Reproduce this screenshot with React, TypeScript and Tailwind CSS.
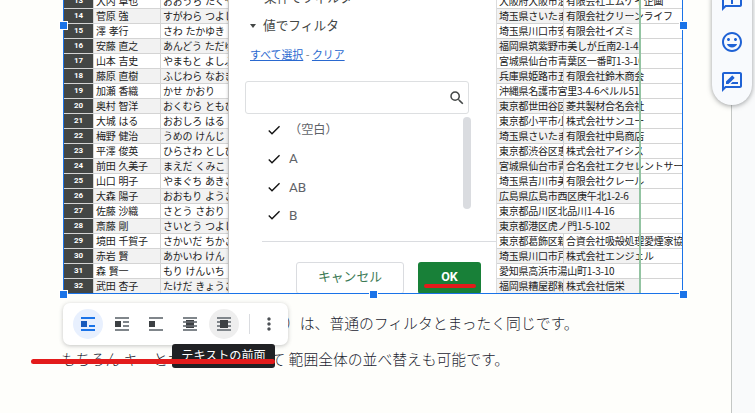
import clsx from "clsx";
import {
  MdCheck,
  MdMoreVert,
  MdOutlineAddComment,
  MdOutlineInsertEmoticon,
  MdOutlineRateReview,
  MdSearch,
} from "react-icons/md";

interface Row {
  no: number;
  nama: string;
  kana: string;
  alamat: string;
  kaisha?: string;
}

const rows: Row[] = [
  { no: 13, nama: "大内 卓也", kana: "おおうち たくや", alamat: "大阪府大阪市浪速区", kaisha: "有限会社エムケイ企画" },
  { no: 14, nama: "菅原 強", kana: "すがわら つよし", alamat: "埼玉県さいたま市", kaisha: "有限会社クリーンライフ" },
  { no: 15, nama: "澤 孝行", kana: "さわ たかゆき", alamat: "埼玉県川口市安行", kaisha: "有限会社イズミ" },
  { no: 16, nama: "安藤 直之", kana: "あんどう ただゆき", alamat: "福岡県筑紫野市美しが丘南2-1-4." },
  { no: 17, nama: "山本 吉史", kana: "やまもと よしふみ", alamat: "宮城県仙台市青葉区一番町1-3-10" },
  { no: 18, nama: "藤原 直樹", kana: "ふじわら なおき", alamat: "兵庫県姫路市五軒", kaisha: "有限会社鈴木商会" },
  { no: 19, nama: "加瀬 香織", kana: "かせ かおり", alamat: "沖縄県名護市宮里3-4-6ペルル51" },
  { no: 20, nama: "奥村 智洋", kana: "おくむら ともひろ", alamat: "東京都世田谷区桜", kaisha: "菱共製材合名会社" },
  { no: 21, nama: "大城 はる", kana: "おおしろ はる", alamat: "東京都小平市小川", kaisha: "株式会社サンユー" },
  { no: 22, nama: "梅野 健治", kana: "うめの けんじ", alamat: "埼玉県さいたま市", kaisha: "有限会社中島商店" },
  { no: 23, nama: "平澤 俊英", kana: "ひらさわ としひで", alamat: "東京都渋谷区恵比", kaisha: "株式会社アイシス" },
  { no: 24, nama: "前田 久美子", kana: "まえだ くみこ", alamat: "宮城県仙台市青葉", kaisha: "合名会社エクセレントサービス" },
  { no: 25, nama: "山口 明子", kana: "やまぐち あきこ", alamat: "埼玉県吉川市美南", kaisha: "有限会社クレール" },
  { no: 26, nama: "大森 陽子", kana: "おおもり ようこ", alamat: "広島県広島市西区庚午北1-2-6" },
  { no: 27, nama: "佐藤 沙織", kana: "さとう さおり", alamat: "東京都品川区北品川1-4-16" },
  { no: 28, nama: "斎藤 剛", kana: "さいとう つよし", alamat: "東京都港区虎ノ門1-5-102" },
  { no: 29, nama: "境田 千賀子", kana: "さかいだ ちかこ", alamat: "東京都葛飾区新小", kaisha: "合資会社吸殻処理愛煙家協会" },
  { no: 30, nama: "赤岩 賢", kana: "あかいわ けん", alamat: "埼玉県川口市戸塚", kaisha: "株式会社エンジェル" },
  { no: 31, nama: "森 賢一", kana: "もり けんいち", alamat: "愛知県高浜市湯山町1-3-10" },
  { no: 32, nama: "武田 杏子", kana: "たけだ きょうこ", alamat: "福岡県糟屋郡粕屋", kaisha: "株式会社信栄" },
];

const cell = "h-full shrink-0 overflow-hidden whitespace-nowrap border-b border-[#d4d4d4]";

function NameTable() {
  return (
    <div className="w-[165px] shrink-0 overflow-hidden border-r border-[#dcdcdc] text-[10px] leading-[13px] tracking-[-0.25px] text-[#222] [word-spacing:1px]">
      <div className="-mt-[6px]">
        {rows.map((r) => (
          <div key={r.no} className={clsx("flex h-[15px]", r.no % 2 === 0 ? "bg-[#f2f2f2]" : "bg-white")}>
            <div className={clsx(cell, "w-[29px] bg-[#434645] text-center font-['Roboto'] text-[8px] leading-[14px] font-bold tracking-normal text-white")}>
              {r.no}
            </div>
            <div className={clsx(cell, "w-[68px] border-r border-l pl-[2px]")}>{r.nama}</div>
            <div className={clsx(cell, "w-[68px] pl-[2px]")}>{r.kana}</div>
          </div>
        ))}
      </div>
    </div>
  );
}

function AddressTable() {
  return (
    <div className="relative w-[186px] shrink-0 overflow-hidden border-l border-[#dcdcdc] text-[10px] leading-[13px] tracking-[-0.25px] text-[#222]">
      <div className="-mt-[6px]">
        {rows.map((r) => {
          const bg = r.no % 2 === 0 ? "bg-[#f2f2f2]" : "bg-white";
          return (
            <div key={r.no} className="flex h-[15px]">
              {r.kaisha ? (
                <>
                  <div className={clsx(cell, bg, "w-[67px] border-r pl-[2px]")}>{r.alamat}</div>
                  <div className={clsx("h-full w-[76px] shrink-0 border-b border-[#d4d4d4] pl-[2px] whitespace-nowrap", bg)}>
                    <span className="relative">{r.kaisha}</span>
                  </div>
                </>
              ) : (
                <div className={clsx(cell, bg, "w-[143px] pl-[2px]")}>{r.alamat}</div>
              )}
              <div className="h-full flex-1 border-b border-[#d4d4d4]" />
            </div>
          );
        })}
      </div>
      {/* Frozen range edge */}
      <div className="absolute inset-y-0 left-[142px] w-[1.5px] bg-[#93c4a2]" />
    </div>
  );
}

function FilterPanel() {
  return (
    <div className="relative w-[267px] shrink-0 overflow-hidden bg-white text-[#444746] shadow-[-1px_0_3px_rgba(0,0,0,0.2)]">
      <div className="-mt-[11px] flex h-[16px] items-center pl-[21px]">
        <span className="h-0 w-0 border-y-[3px] border-l-[4px] border-y-transparent border-l-[#444746]" />
        <span className="ml-[10px] text-[12.7px] leading-[16px]">条件でフィルタ</span>
      </div>
      <div className="mt-[11px] flex h-[18px] items-center pl-[21px]">
        <span className="mt-[2px] h-0 w-0 border-x-[3.5px] border-t-[4px] border-x-transparent border-t-[#444746]" />
        <span className="ml-[7px] text-[12.7px] leading-[18px]">値でフィルタ</span>
      </div>
      <div className="mt-[11px] pl-[21px] text-[10.9px] leading-[18px] text-[#2a69d0]">
        <span className="underline underline-offset-1">すべて選択</span>
        <span className="text-[#777]"> - </span>
        <span className="underline underline-offset-1">クリア</span>
      </div>
      <div className="mt-[18px] ml-[16px] flex h-[33px] w-[224px] items-center justify-end rounded-[3px] border border-[#dddfe1] pr-[2px]">
        <MdSearch className="size-[18px] text-[#444746]" />
      </div>
      <div className="mt-[2px] ml-[16px] flex h-[112px] w-[226px] justify-between">
        <div className="pl-[21px]">
          {["（空白）", "A", "AB", "B"].map((v) => (
            <div key={v} className="flex h-[28.4px] items-center font-['Roboto','Noto_Sans_CJK_JP'] text-[13.5px] text-[#5f6368]">
              <MdCheck className="mr-[7px] size-[16px] text-[#111]" />
              {v === "（空白）" ? <span className="text-[12.2px] leading-[18px]">{v}</span> : <span>{v}</span>}
            </div>
          ))}
        </div>
        <div className="mt-[1px] h-[92px] w-[8px] rounded-full bg-[#dadce0]" />
      </div>
      <div className="mt-[13px] ml-[33px] h-px bg-[#dadce0]" />
      <div className="mt-[20px] ml-[67px] flex gap-[14px]">
        <div className="flex h-[32px] w-[108px] items-center justify-center rounded-[3px] border border-[#dadce0] pb-[4px] text-[12.8px] text-[#3c7a55]">
          キャンセル
        </div>
        <div className="flex h-[32px] w-[63px] flex-col items-center rounded-[3px] bg-[#188038] pt-[7px] font-['Roboto'] text-[12.5px] leading-[16px] font-bold text-white">
          OK
          <div className="h-[4px] w-[52px] shrink-0 -translate-y-px rounded-full bg-[#e31b1b]" />
        </div>
      </div>
    </div>
  );
}

const bar = "fill-[#80868b]";
const box = "fill-[#3c4043]";

function WrapInline() {
  return (
    <svg viewBox="0 0 14 14" className="size-[14px] fill-[#1a73e8]">
      <path d="M0 0h14v2H0zM0 12h14v2H0zM8 8h6v2H8z" />
      <path d="M0 4h6v6H0z" className="fill-[#185abc]" />
    </svg>
  );
}

function WrapText() {
  return (
    <svg viewBox="0 0 14 14" className="size-[14px]">
      <path d="M0 0h14v2H0zM0 12h14v2H0zM8 4h6v2H8zM8 8h6v2H8z" className={bar} />
      <path d="M0 4h6v6H0z" className={box} />
    </svg>
  );
}

function BreakText() {
  return (
    <svg viewBox="0 0 14 14" className="size-[14px]">
      <path d="M0 0h14v2H0zM0 12h14v2H0z" className={bar} />
      <path d="M0 4h6v6H0z" className={box} />
    </svg>
  );
}

function BehindText() {
  return (
    <svg viewBox="0 0 14 14" className="size-[14px]">
      <path d="M3 3h8v8H3z" className={box} />
      <path d="M0 0h14v2H0zM0 12h14v2H0zM0 4h14v2H0zM0 8h14v2H0z" className={bar} />
      <path d="M3 4h8v2H3zM3 8h8v2H3z" className="fill-[#5f6368]" />
    </svg>
  );
}

function FrontText() {
  return (
    <svg viewBox="0 0 14 14" className="size-[14px]">
      <path d="M0 0h14v2H0zM0 12h14v2H0zM0 4h14v2H0zM0 8h14v2H0z" className={bar} />
      <path d="M3 3h8v8H3z" className={box} />
    </svg>
  );
}

function ImageToolbar() {
  return (
    <div className="absolute top-[303px] left-[63px] flex h-[42px] w-[225px] items-center rounded-[7px] bg-white pl-[10px] shadow-[0_1px_4px_rgba(60,64,67,0.3)]">
      <div className="flex size-[30px] items-center justify-center rounded-full bg-[#e8f0fe]">
        <WrapInline />
      </div>
      <div className="ml-[4px] flex size-[30px] items-center justify-center"><WrapText /></div>
      <div className="ml-[4px] flex size-[30px] items-center justify-center"><BreakText /></div>
      <div className="ml-[4px] flex size-[30px] items-center justify-center"><BehindText /></div>
      <div className="ml-[4px] flex size-[30px] items-center justify-center rounded-full bg-[#eeeeee]">
        <FrontText />
      </div>
      <div className="ml-[10px] h-[20px] w-px bg-[#dadce0]" />
      <MdMoreVert className="ml-[9px] size-[20px] text-[#4d5156]" />
    </div>
  );
}

const handles = [
  "top-[21px] left-[59px]",
  "top-[21px] left-[679px]",
  "top-[290px] left-[59px]",
  "top-[290px] left-[369px]",
  "top-[290px] left-[679px]",
];

export default function App() {
  return (
    <div className="relative flex h-[413px] w-[755px] overflow-hidden bg-[#fefefb] font-['Noto_Sans_CJK_JP',sans-serif]">
      <main className="w-[731px] shrink-0">
        {/* Selected image */}
        <div className="ml-[63px] flex h-[294px] w-[620px] overflow-hidden border-x border-b border-[#1a73e8] bg-white">
          <NameTable />
          <FilterPanel />
          <AddressTable />
        </div>

        {/* Document text */}
        <div className="pt-[11px] pl-[61px] text-[14.8px] leading-[35px] font-light whitespace-nowrap text-[#1b2430]">
          <p className="flex h-[36px]">
            <span className="w-[224px] overflow-hidden">フィルタ表示（フィルタビューの</span>
            <span>）は、普通のフィルタとまったく同じです。</span>
          </p>
          <p>もちろん キーとなる列を選択して 範囲全体の並べ替えも可能です。</p>
        </div>
      </main>
      <aside className="flex-1 border-l border-[#c4c7c5] bg-[#f9fafb]" />

      {handles.map((pos) => (
        <div key={pos} className={clsx("absolute size-[9px] border border-white bg-[#1a73e8]", pos)} />
      ))}

      <ImageToolbar />
      <div className="absolute top-[344px] left-[172px] flex h-[24px] w-[103px] items-center justify-center rounded-[3px] bg-[#202124] pb-[2px] text-[12.1px] text-white">
        テキストの前面
      </div>
      <div className="absolute top-[359px] left-[31px] h-[5px] w-[244px] rounded-full bg-[#e31b1b]" />

      {/* Comment actions */}
      <div className="absolute -top-[20px] left-[712px] flex h-[125px] w-[40px] flex-col items-center rounded-full bg-[#f8fafd] pt-[9px] text-[#1f62d5] shadow-[0_1px_5px_rgba(60,64,67,0.5)]">
        <MdOutlineAddComment className="size-[24px] -scale-x-100" />
        <MdOutlineInsertEmoticon className="mt-[17px] size-[24px]" />
        <MdOutlineRateReview className="mt-[16px] size-[24px]" />
      </div>
    </div>
  );
}
